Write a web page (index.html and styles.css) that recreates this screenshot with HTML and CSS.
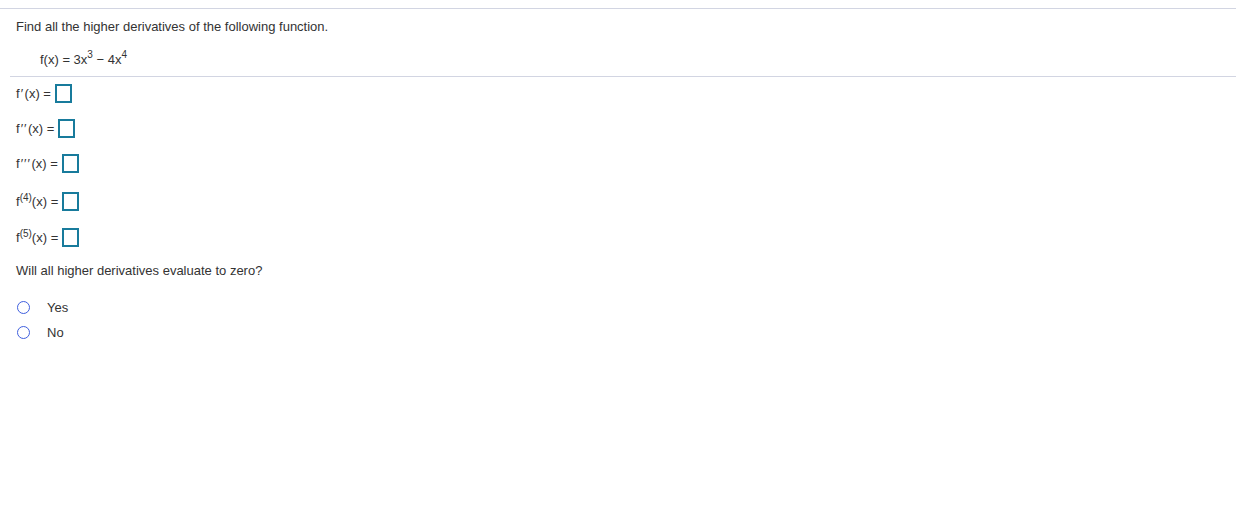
FILE: index.html
```html
<!DOCTYPE html>
<html>
<head>
<meta charset="utf-8">
<link rel="stylesheet" href="styles.css">
</head>
<body>
<div class="page">
  <div class="intro">
    <p class="prompt">Find all the higher derivatives of the following function.</p>
    <p class="func">f(x) = 3x<sup>3</sup> − 4x<sup>4</sup></p>
  </div>
  <div class="answers">
    <div class="row r1"><span class="lbl">f<span class="pr">′</span>(x) =</span><span class="box"></span></div>
    <div class="row r2"><span class="lbl">f<span class="pr">′′</span>(x) =</span><span class="box"></span></div>
    <div class="row r3"><span class="lbl">f<span class="pr">′′′</span>(x) =</span><span class="box"></span></div>
    <div class="row r4"><span class="lbl">f<sup class="ord">(4)</sup>(x) =</span><span class="box"></span></div>
    <div class="row r5"><span class="lbl">f<sup class="ord">(5)</sup>(x) =</span><span class="box"></span></div>
    <p class="prompt q2">Will all higher derivatives evaluate to zero?</p>
    <div class="options">
      <label class="opt"><span class="radio"></span><span>Yes</span></label>
      <label class="opt"><span class="radio"></span><span>No</span></label>
    </div>
  </div>
</div>
</body>
</html>
```
FILE: styles.css
```css
html, body {
  margin: 0;
  padding: 0;
  background: #fff;
}
body {
  font-family: "Liberation Sans", Arial, sans-serif;
  font-size: 13px;
  line-height: 15px;
  color: #333;
}
.page {
  margin-top: 8px;
  border-top: 1px solid #d2d5e2;
}
.intro {
  padding-left: 16px;
}
.prompt {
  margin: 10px 0 0 0;
}
.func {
  margin: 18px 0 0 24px;
}
sup {
  font-size: 10px;
  line-height: 0;
  vertical-align: 6px;
}
.answers {
  margin-top: 9px;
  margin-left: 10px;
  border-top: 1px solid #d2d5e2;
  padding: 7px 0 0 6px;
}
.row {
  display: flex;
  align-items: center;
  height: 19px;
}
.row + .row {
  margin-top: 16px;
}
.row.r4 {
  margin-top: 19px;
}
.row.r5 {
  margin-top: 17px;
}
.lbl {
  white-space: nowrap;
}
.pr {
  letter-spacing: 1px;
  margin: 0 0.5px 0 1px;
}
sup.ord {
  vertical-align: 5px;
}
.box {
  box-sizing: border-box;
  width: 17px;
  height: 19px;
  border: 2px solid #187b9c;
  margin-left: 4px;
  background: #fff;
}
.q2 {
  margin-top: 16px;
}
.options {
  display: flex;
  flex-direction: column;
  gap: 10px;
  margin-top: 22px;
}
.opt {
  display: flex;
  align-items: center;
  height: 15px;
}
.radio {
  box-sizing: border-box;
  width: 13px;
  height: 13px;
  border: 1.5px solid #3f5fde;
  border-radius: 50%;
  margin-left: 1px;
  margin-right: 17px;
}
```
